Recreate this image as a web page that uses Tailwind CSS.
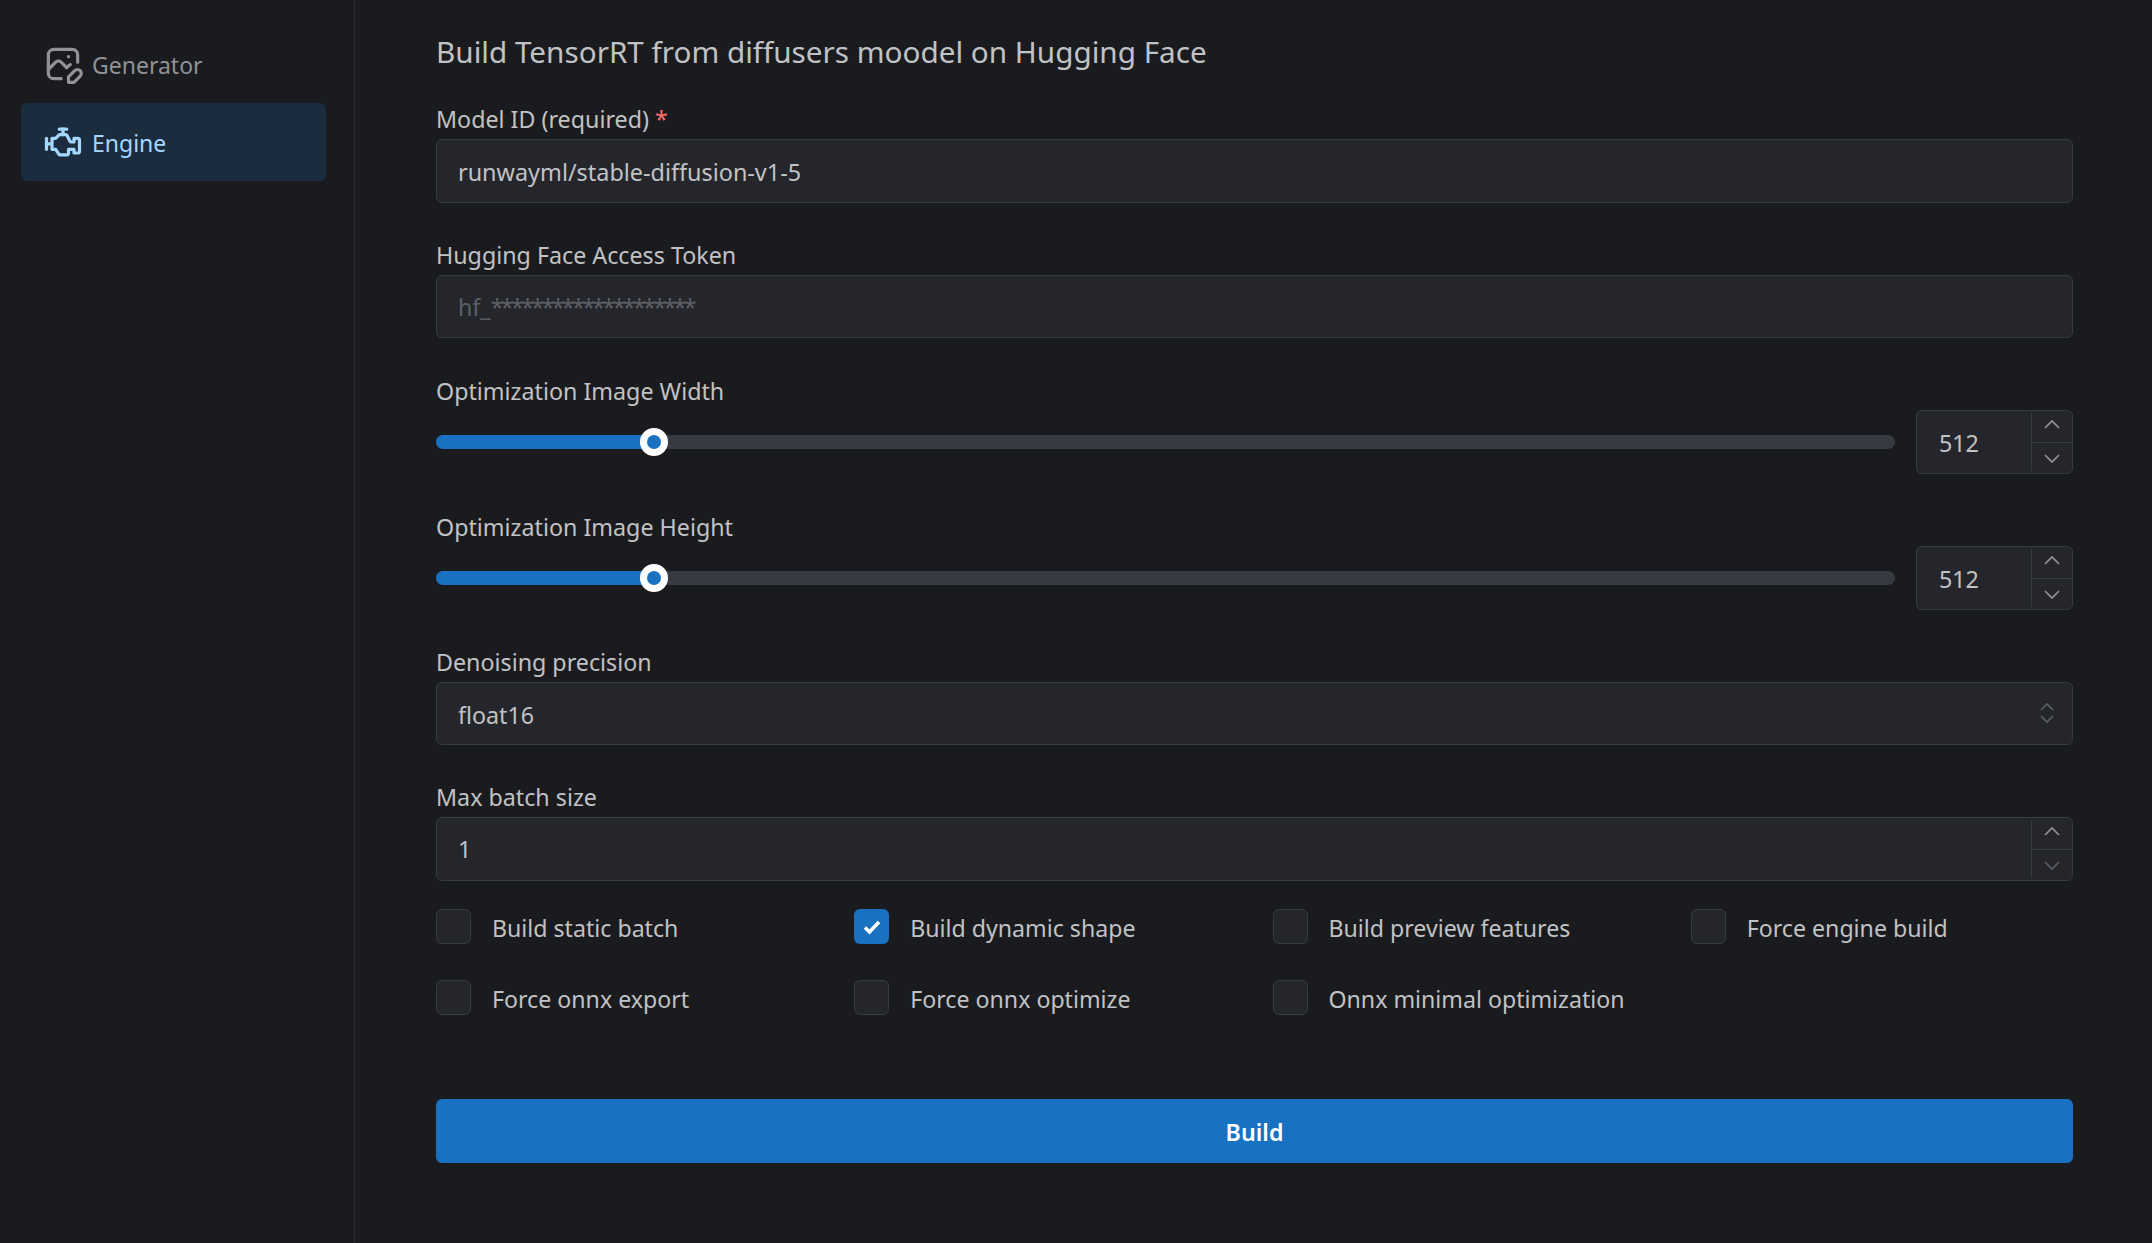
<!DOCTYPE html>
<html lang="en">
<head>
    <meta charset="UTF-8" />
    <title>Build</title>
    <script src="https://cdn.jsdelivr.net/npm/@tailwindcss/browser@4"></script>
</head>
<body class="bg-[#1a1b1e] text-[#c1c2c5] font-['Noto_Sans',sans-serif] text-[23.25px] h-[1243px] overflow-hidden">
    <div class="flex h-full">
        <!-- sidebar -->
        <nav class="w-[355px] shrink-0 border-r border-[#2c2e33] pl-[21px] pr-[28px] pt-[25px] text-[23px]">
            <div class="flex items-center h-[78px] pl-[20px] gap-[7px] text-[#909296]">
                <svg class="w-[44px] h-[44px]" viewBox="0 0 24 24" fill="none" stroke="currentColor" stroke-width="1.75" stroke-linecap="round" stroke-linejoin="round">
                    <path d="M15 8h.01" /><path d="M11 20h-4a3 3 0 0 1 -3 -3v-10a3 3 0 0 1 3 -3h10a3 3 0 0 1 3 3v4" /><path d="M4 15l4 -4c.928 -.893 2.072 -.893 3 0l3 3" /><path d="M14 14l1 -1c.31 -.298 .644 -.497 .987 -.596" /><path d="M18.42 15.61a2.1 2.1 0 0 1 2.97 2.97l-3.39 3.42h-3v-3l3.42 -3.39z" />
                </svg>
                <span class="pt-[3px]">Generator</span>
            </div>
            <div class="flex items-center h-[78px] pl-[20px] gap-[7px] rounded-[6px] bg-[#1a2c3d] text-[#a5d8ff]">
                <svg class="w-[44px] h-[44px]" viewBox="0 0 24 24" fill="none" stroke="currentColor" stroke-width="1.75" stroke-linecap="round" stroke-linejoin="round">
                    <path d="M3 10v6" /><path d="M12 5v3" /><path d="M10 5h4" /><path d="M5 13h-2" /><path d="M6 10h2l2 -2h3.382a1 1 0 0 1 .894 .553l1.448 2.894a1 1 0 0 0 .894 .553h1.382v-2h2a1 1 0 0 1 1 1v6a1 1 0 0 1 -1 1h-2v-2h-3v2a1 1 0 0 1 -1 1h-3.465a1 1 0 0 1 -.832 -.445l-1.703 -2.555h-2v-6z" />
                </svg>
                <span class="pt-[2px]">Engine</span>
            </div>
        </nav>

        <!-- main -->
        <main class="flex-1 pl-[81px] pr-[79px]">
            <h1 class="h-[103px] pt-[28px] text-[29.7px] leading-[48px]">Build TensorRT from diffusers moodel on Hugging Face</h1>

            <label class="block h-[36px] leading-[32px]">Model ID (required) <span class="text-[#ff6b6b]">*</span></label>
            <div class="h-[64px] flex items-center px-[21px] pt-[3px] text-[23.4px] bg-[#25262b] border border-[#373a40] rounded-[6px]">runwayml/stable-diffusion-v1-5</div>

            <label class="block h-[36px] mt-[36px] leading-[32px]">Hugging Face Access Token</label>
            <div class="h-[63px] flex items-center px-[21px] pt-[2px] bg-[#25262b] border border-[#373a40] rounded-[6px] text-[#5c5f66]"><span>hf_<span class="tracking-[-2.65px]">********************</span></span></div>

            <label class="block h-[35px] mt-[37px] leading-[32px]">Optimization Image Width</label>
            <div class="flex items-center gap-[21px] h-[64px]">
                <div class="relative flex-1 h-[14px] rounded-full bg-[#373a40]">
                    <div class="h-full w-[218px] rounded-full bg-[#1971c2]"></div>
                    <div class="absolute left-[204px] top-[-7px] w-[28px] h-[28px] rounded-full bg-[#1971c2] border-[7px] border-white"></div>
                </div>
                <div class="w-[157px] h-[64px] flex bg-[#25262b] border border-[#373a40] rounded-[6px]">
                    <div class="flex-1 flex items-center pl-[22px] pt-[2px]">512</div>
                    <div class="w-[41px] flex flex-col my-[2px] border-l border-[#373a40]">
                        <div class="flex-1 flex items-center justify-center border-b border-[#373a40] text-[#909296]">
                            <svg class="w-[24px] h-[24px] mb-[4px]" viewBox="0 0 24 24" fill="none" stroke="currentColor" stroke-width="1.75"><path d="M5 15l7 -7l7 7" /></svg>
                        </div>
                        <div class="flex-1 flex items-center justify-center text-[#909296]">
                            <svg class="w-[24px] h-[24px] mt-[3px]" viewBox="0 0 24 24" fill="none" stroke="currentColor" stroke-width="1.75"><path d="M5 9l7 7l7 -7" /></svg>
                        </div>
                    </div>
                </div>
            </div>

            <label class="block h-[35px] mt-[37px] leading-[32px]">Optimization Image Height</label>
            <div class="flex items-center gap-[21px] h-[64px]">
                <div class="relative flex-1 h-[14px] rounded-full bg-[#373a40]">
                    <div class="h-full w-[218px] rounded-full bg-[#1971c2]"></div>
                    <div class="absolute left-[204px] top-[-7px] w-[28px] h-[28px] rounded-full bg-[#1971c2] border-[7px] border-white"></div>
                </div>
                <div class="w-[157px] h-[64px] flex bg-[#25262b] border border-[#373a40] rounded-[6px]">
                    <div class="flex-1 flex items-center pl-[22px] pt-[2px]">512</div>
                    <div class="w-[41px] flex flex-col my-[2px] border-l border-[#373a40]">
                        <div class="flex-1 flex items-center justify-center border-b border-[#373a40] text-[#909296]">
                            <svg class="w-[24px] h-[24px] mb-[4px]" viewBox="0 0 24 24" fill="none" stroke="currentColor" stroke-width="1.75"><path d="M5 15l7 -7l7 7" /></svg>
                        </div>
                        <div class="flex-1 flex items-center justify-center text-[#909296]">
                            <svg class="w-[24px] h-[24px] mt-[3px]" viewBox="0 0 24 24" fill="none" stroke="currentColor" stroke-width="1.75"><path d="M5 9l7 7l7 -7" /></svg>
                        </div>
                    </div>
                </div>
            </div>

            <label class="block h-[36px] mt-[36px] leading-[32px]">Denoising precision</label>
            <div class="h-[63px] flex items-center justify-between pl-[21px] pr-[13px] bg-[#25262b] border border-[#373a40] rounded-[6px]">
                <span class="pt-[3px]">float16</span>
                <svg class="w-[24px] h-[24px] mb-[2px] text-[#5c5f66]" viewBox="0 0 24 24" fill="none" stroke="currentColor" stroke-width="1.75"><path d="M6 9l6 -6l6 6" /><path d="M6 15l6 6l6 -6" /></svg>
            </div>

            <label class="block h-[36px] mt-[36px] leading-[32px]">Max batch size</label>
            <div class="h-[64px] flex bg-[#25262b] border border-[#373a40] rounded-[6px]">
                <div class="flex-1 flex items-center pl-[21px]">1</div>
                <div class="w-[41px] flex flex-col my-[2px] border-l border-[#373a40]">
                    <div class="flex-1 flex items-center justify-center border-b border-[#373a40] text-[#909296]">
                        <svg class="w-[24px] h-[24px] mb-[4px]" viewBox="0 0 24 24" fill="none" stroke="currentColor" stroke-width="1.75"><path d="M5 15l7 -7l7 7" /></svg>
                    </div>
                    <div class="flex-1 flex items-center justify-center text-[#5c5f66]">
                        <svg class="w-[24px] h-[24px] mt-[3px]" viewBox="0 0 24 24" fill="none" stroke="currentColor" stroke-width="1.75"><path d="M5 9l7 7l7 -7" /></svg>
                    </div>
                </div>
            </div>

            <div class="grid grid-cols-4 gap-x-[36px] gap-y-[36px] mt-[28px] text-[23.15px]">
                <div class="flex items-center gap-[21px] h-[35px]"><span class="w-[35px] h-[35px] rounded-[6px] bg-[#25262b] border border-[#373a40]"></span><span class="pt-[3px]">Build static batch</span></div>
                <div class="flex items-center gap-[21px] h-[35px]">
                    <span class="w-[35px] h-[35px] rounded-[6px] bg-[#1971c2] flex items-center justify-center">
                        <svg class="w-[24px] h-[24px]" viewBox="0 0 24 24" fill="none" stroke="white" stroke-width="3.5"><path d="M5 12.5l4.5 4.5l9.5 -10" /></svg>
                    </span><span class="pt-[3px]">Build dynamic shape</span></div>
                <div class="flex items-center gap-[21px] h-[35px]"><span class="w-[35px] h-[35px] rounded-[6px] bg-[#25262b] border border-[#373a40]"></span><span class="pt-[3px]">Build preview features</span></div>
                <div class="flex items-center gap-[21px] h-[35px]"><span class="w-[35px] h-[35px] rounded-[6px] bg-[#25262b] border border-[#373a40]"></span><span class="pt-[3px]">Force engine build</span></div>
                <div class="flex items-center gap-[21px] h-[35px]"><span class="w-[35px] h-[35px] rounded-[6px] bg-[#25262b] border border-[#373a40]"></span><span class="pt-[3px]">Force onnx export</span></div>
                <div class="flex items-center gap-[21px] h-[35px]"><span class="w-[35px] h-[35px] rounded-[6px] bg-[#25262b] border border-[#373a40]"></span><span class="pt-[3px]">Force onnx optimize</span></div>
                <div class="flex items-center gap-[21px] h-[35px]"><span class="w-[35px] h-[35px] rounded-[6px] bg-[#25262b] border border-[#373a40]"></span><span class="pt-[3px]">Onnx minimal optimization</span></div>
            </div>

            <button class="w-full h-[64px] mt-[84px] pt-[3px] rounded-[6px] bg-[#1971c2] text-white font-semibold">Build</button>
        </main>
    </div>
</body>
</html>
